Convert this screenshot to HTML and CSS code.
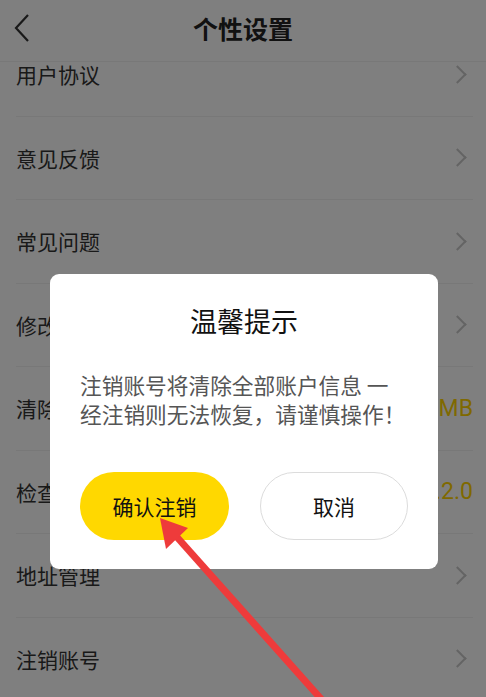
FILE: index.html
```html
<!DOCTYPE html>
<html lang="zh-CN">
  <head>
    <meta charset="UTF-8" />
    <meta name="viewport" content="width=device-width, initial-scale=1.0" />
    <title>个性设置</title>
    <link rel="stylesheet" href="styles.css">
  </head>
  <body>
    <div class="header">
      <svg class="back" width="20" height="32" viewBox="0 0 20 32">
        <polyline points="15,3 3,16 15,29" fill="none" stroke="#333" stroke-width="2.2" />
      </svg>
      <div class="header-title">个性设置</div>
    </div>
    <div class="list">
      <div class="row"><span class="label">用户协议</span><span class="arrow"></span></div>
      <div class="row"><span class="label">意见反馈</span><span class="arrow"></span></div>
      <div class="row"><span class="label">常见问题</span><span class="arrow"></span></div>
      <div class="row"><span class="label">修改密码</span><span class="arrow"></span></div>
      <div class="row"><span class="label">清除缓存</span><span class="value">0MB</span></div>
      <div class="row"><span class="label">检查更新</span><span class="value">V1.2.0</span></div>
      <div class="row"><span class="label">地址管理</span><span class="arrow"></span></div>
      <div class="row"><span class="label">注销账号</span><span class="arrow"></span></div>
    </div>

    <div class="mask">
      <div class="dialog">
        <div class="dialog-title">温馨提示</div>
        <div class="dialog-content">
          <p>注销账号将清除全部账户信息 一</p>
          <p>经注销则无法恢复，请谨慎操作！</p>
        </div>
        <div class="dialog-btns">
          <div class="btn btn-ok">确认注销</div>
          <div class="btn btn-cancel">取消</div>
        </div>
      </div>
    </div>

    <!-- 标注箭头 -->
    <svg class="pointer" width="486" height="697" viewBox="0 0 486 697">
      <line x1="176" y1="536" x2="322" y2="700" stroke="#ee3b3b" stroke-width="7" />
      <polygon points="160,518 188,528 166,549" fill="#ee3b3b" />
    </svg>
  </body>
</html>
```

FILE: styles.css
```css
* {
  margin: 0;
  padding: 0;
  box-sizing: border-box;
}
body {
  font-family: "Noto Sans CJK SC", "Noto Sans", sans-serif;
  background-color: #fff;
  color: #333;
  width: 486px;
  height: 697px;
  overflow: hidden;
}
.header {
  position: fixed;
  top: 0;
  left: 0;
  right: 0;
  height: 62px;
  background-color: #fff;
  border-bottom: 1px solid #f0f0f0;
  display: flex;
  justify-content: center;
  align-items: flex-start;
  padding-top: 9px;
  z-index: 1;
}
.back {
  position: absolute;
  left: 13px;
  top: 12px;
}
.header-title {
  font-size: 25px;
  font-weight: bold;
  line-height: 38px;
  color: #222;
}
.list {
  padding: 33px 13px 0 16px;
}
.row {
  height: 83.5px;
  border-bottom: 1px solid #f0f0f0;
  display: flex;
  justify-content: space-between;
  align-items: center;
}
.label {
  font-size: 21px;
  color: #333;
}
.arrow {
  width: 13px;
  height: 13px;
  margin-right: 9px;
  border-top: 2px solid #c8c8c8;
  border-right: 2px solid #c8c8c8;
  transform: rotate(45deg);
}
.value {
  font-family: Roboto, "Noto Sans", sans-serif;
  font-size: 23px;
  color: #ffd200;
}
.mask {
  position: fixed;
  top: 0;
  right: 0;
  bottom: 0;
  left: 0;
  background-color: rgba(0, 0, 0, 0.5);
  display: flex;
  justify-content: center;
  align-items: flex-start;
  padding-top: 274px;
  padding-left: 2px;
  z-index: 2;
}
.dialog {
  width: 388px;
  height: 295px;
  background-color: #fff;
  border-radius: 9px;
  padding: 27px 30px 0 30px;
}
.dialog-title {
  text-align: center;
  font-size: 27px;
  line-height: 40px;
  color: #111;
}
.dialog-content {
  margin-top: 29px;
  font-size: 21.7px;
  line-height: 29px;
  color: #555;
  white-space: nowrap;
}
.dialog-btns {
  margin-top: 44px;
  display: flex;
  justify-content: space-between;
}
.btn {
  width: 148px;
  height: 68px;
  border-radius: 34px;
  display: flex;
  justify-content: center;
  align-items: center;
  font-size: 21px;
  color: #111;
}
.btn-ok {
  background-color: #ffd800;
  width: 149px;
}
.btn-cancel {
  border: 1.5px solid #dcdcdc;
  background-color: #fff;
}
.pointer {
  position: fixed;
  top: 0;
  left: 0;
  z-index: 3;
}
```
